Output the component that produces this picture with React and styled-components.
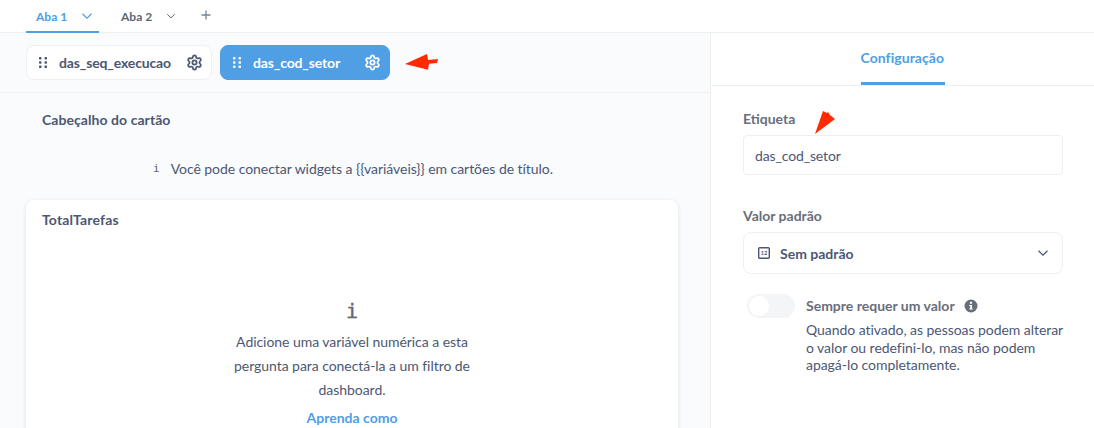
import React from "react";
import styled, { createGlobalStyle } from "styled-components";
import { Settings } from "lucide-react";

const Global = createGlobalStyle`
  html, body { margin: 0; padding: 0; background: #fff; }
  * { box-sizing: border-box; }
  body { font-family: Lato, "Noto Sans", sans-serif; color: #4c5773; }
`;

const Page = styled.div`
  position: relative;
  width: 1094px;
  height: 428px;
  overflow: hidden;
  display: flex;
  flex-direction: column;
`;
const TabBar = styled.div`
  height: 33px;
  flex: none;
  display: flex;
  align-items: stretch;
  padding-left: 26px;
  border-bottom: 1px solid #eeeff1;
`;
const Tab = styled.div`
  display: flex;
  align-items: center;
  gap: ${p => p.$gap}px;
  height: 33px;
  width: ${p => p.$w}px;
  padding: 1px 0 0 10px;
  font-size: 12px;
  font-weight: 700;
  color: ${p => (p.$active ? "#509ee3" : "#5d6579")};
  border-bottom: ${p => (p.$active ? "2px solid #509ee3" : "2px solid transparent")};
  margin-right: ${p => p.$mr || 0}px;
`;
const Plus = styled.div`
  display: flex;
  align-items: center;
  color: #7a8294;
  padding-bottom: 2px;
`;
const Body = styled.div`
  flex: 1;
  display: flex;
  min-height: 0;
`;
const Left = styled.div`
  width: 711px;
  flex: none;
  background: #f9fbfc;
  border-right: 1px solid #eeeff1;
  display: flex;
  flex-direction: column;
`;
const ChipRow = styled.div`
  height: 60px;
  flex: none;
  display: flex;
  align-items: flex-start;
  gap: 8px;
  padding: 12px 0 0 26px;
  border-bottom: 1px solid #eeeff1;
`;
const Chip = styled.div`
  width: ${p => p.$w}px;
  height: 35px;
  display: flex;
  align-items: center;
  padding: 0 8px 0 12px;
  border-radius: 8px;
  font-size: 14px;
  font-weight: 700;
  letter-spacing: -0.14px;
  background: ${p => (p.$active ? "#509ee3" : "#fff")};
  color: ${p => (p.$active ? "#fff" : "#4c5773")};
  border: 1px solid ${p => (p.$active ? "#509ee3" : "#eeeff1")};
`;
const ChipLabel = styled.span`
  flex: 1;
  margin-left: 12px;
  white-space: nowrap;
`;
const SectionTitle = styled.div`
  font-size: 14px;
  font-weight: 700;
  line-height: 17px;
  letter-spacing: 0.06px;
  padding: 18px 0 0 42px;
`;
const Hint = styled.div`
  display: flex;
  justify-content: center;
  align-items: center;
  gap: 11px;
  margin-top: 32px;
  padding-right: 4px;
  height: 20px;
  font-size: 14px;
  letter-spacing: -0.05px;
`;
const MonoI = styled.span`
  font-family: "DejaVu Sans Mono", monospace;
  font-size: ${p => p.$s}px;
  -webkit-text-stroke: ${p => p.$stroke || 0}px #5d6579;
  line-height: 1;
  color: #5d6579;
`;
const Card = styled.div`
  width: 652px;
  height: 300px;
  margin: 23px 0 0 26px;
  flex: none;
  background: #fff;
  border-radius: 8px;
  box-shadow: 0 1px 5px rgba(0, 0, 0, 0.1);
  padding: 11px 16px 0;
`;
const CardTitle = styled.div`
  font-size: 14px;
  font-weight: 700;
  line-height: 17px;
  letter-spacing: 0.15px;
`;
const CardEmpty = styled.div`
  display: flex;
  flex-direction: column;
  align-items: center;
  margin-top: 73px;
  text-align: center;
`;
const EmptyText = styled.div`
  width: 250px;
  margin-top: 9px;
  font-size: 14px;
  line-height: 24px;
  letter-spacing: -0.05px;
`;
const LearnLink = styled.div`
  margin-top: 7px;
  font-size: 14px;
  font-weight: 700;
  line-height: 17px;
  color: #509ee3;
`;
const Right = styled.div`
  flex: 1;
  min-width: 0;
  background: #fff;
  display: flex;
  flex-direction: column;
`;
const SideTabs = styled.div`
  height: 53px;
  flex: none;
  display: flex;
  justify-content: center;
  border-bottom: 1px solid #eeeff1;
`;
const SideTab = styled.div`
  height: 52px;
  width: 84px;
  padding-top: 16px;
  font-size: 14px;
  font-weight: 700;
  line-height: 17px;
  letter-spacing: 0.05px;
  color: #509ee3;
  white-space: nowrap;
  border-bottom: 3px solid #509ee3;
`;
const SideBody = styled.div`
  padding: 24px 31px 0 32px;
`;
const Label = styled.div`
  font-size: 14px;
  font-weight: 700;
  line-height: 17px;
  color: #696e7b;
  margin-bottom: 8px;
`;
const Input = styled.div`
  height: 40px;
  display: flex;
  align-items: center;
  padding: 0 11px;
  font-size: 14px;
  letter-spacing: -0.14px;
  border: 1px solid #eeeff1;
  border-radius: 4px;
  margin-bottom: 32px;
`;
const Select = styled.div`
  height: 42px;
  display: flex;
  align-items: center;
  gap: 10px;
  padding: 0 13px 0 14px;
  font-size: 14px;
  font-weight: 700;
  border: 1px solid #eeeff1;
  border-radius: 8px;
  margin-bottom: 20px;
`;
const SelectText = styled.span`
  flex: 1;
`;
const ToggleRow = styled.div`
  display: flex;
  padding-left: 4px;
`;
const Toggle = styled.div`
  width: 48px;
  height: 24px;
  flex: none;
  border-radius: 12px;
  background: #f3f5f7;
  padding: 2px;
  margin-right: 11px;
`;
const Knob = styled.div`
  width: 20px;
  height: 20px;
  border-radius: 50%;
  background: #fff;
`;
const ToggleText = styled.div`
  display: flex;
  flex-direction: column;
  min-width: 0;
`;
const ToggleTitle = styled.div`
  display: flex;
  align-items: center;
  gap: 9px;
  font-size: 14px;
  font-weight: 700;
  line-height: 24px;
  color: #696e7b;
  white-space: nowrap;
`;
const ToggleDesc = styled.div`
  font-size: 14px;
  line-height: 17.5px;
  letter-spacing: -0.05px;
  margin-top: 3px;
  width: 259px;
`;
const Annotation = styled.svg`
  position: absolute;
  left: ${p => p.$x}px;
  top: ${p => p.$y}px;
`;

const Chevron = ({ size = 12, color = "currentColor" }) => (
  <svg width={size} height={size} viewBox="0 0 12 12" fill="none" stroke={color} strokeWidth="1.2">
    <path d="M1.5 3.8 6 8.2l4.5-4.4" />
  </svg>
);
const Grip = ({ color }) => (
  <svg width="8" height="11" viewBox="0 0 8 11" fill={color} style={{ flex: "none" }}>
    {[0, 5.5].map(x => [0, 4.25, 8.5].map(y => <rect key={`${x}-${y}`} x={x} y={y} width="2.5" height="2.5" rx="0.7" />))}
  </svg>
);
const Calendar = () => (
  <svg width="12" height="12" viewBox="0 0 12 12" style={{ flex: "none" }}>
    <rect x="0.7" y="0.7" width="10.6" height="10.6" rx="1" fill="none" stroke="#4c5773" strokeWidth="1.4" />
    <text x="6" y="8.1" fontSize="5.5" fontWeight="700" fontFamily="Lato, sans-serif" textAnchor="middle" fill="#4c5773">12</text>
  </svg>
);
const InfoDot = () => (
  <svg width="14" height="14" viewBox="0 0 14 14">
    <circle cx="7" cy="7" r="6.5" fill="#696e7b" />
    <rect x="6" y="2.8" width="2" height="2" fill="#fff" />
    <path d="M5.3 6h2.7v3.6h.8v1H5.3v-1h.9V7h-.9z" fill="#fff" />
  </svg>
);

export default function App() {
  return (
    <Page>
      <Global />
      <TabBar>
        <Tab $active $w={73} $mr={12} $gap={14}>
          Aba 1 <Chevron />
        </Tab>
        <Tab $w={73} $mr={16} $gap={14}>
          Aba 2 <Chevron size={10} />
        </Tab>
        <Plus>
          <svg width="12" height="12" viewBox="0 0 12 12" stroke="currentColor" strokeWidth="1.3" fill="none">
            <path d="M6 1.5v9M1.5 6h9" />
          </svg>
        </Plus>
      </TabBar>
      <Body>
        <Left>
          <ChipRow>
            <Chip $w={186}>
              <Grip color="#4c5773" />
              <ChipLabel>das_seq_execucao</ChipLabel>
              <Settings size={17} color="#4c5773" strokeWidth={2.5} />
            </Chip>
            <Chip $active $w={170}>
              <Grip color="#fff" />
              <ChipLabel>das_cod_setor</ChipLabel>
              <Settings size={17} color="#fff" strokeWidth={2.5} />
            </Chip>
          </ChipRow>
          <SectionTitle>Cabeçalho do cartão</SectionTitle>
          <Hint>
            <MonoI $s={11}>i</MonoI>
            <span>Você pode conectar widgets a {"{{variáveis}}"} em cartões de título.</span>
          </Hint>
          <Card>
            <CardTitle>TotalTarefas</CardTitle>
            <CardEmpty>
              <MonoI $s={20} $stroke={0.4}>i</MonoI>
              <EmptyText>Adicione uma variável numérica a esta pergunta para conectá-la a um filtro de dashboard.</EmptyText>
              <LearnLink>Aprenda como</LearnLink>
            </CardEmpty>
          </Card>
        </Left>
        <Right>
          <SideTabs>
            <SideTab>Configuração</SideTab>
          </SideTabs>
          <SideBody>
            <Label>Etiqueta</Label>
            <Input>das_cod_setor</Input>
            <Label>Valor padrão</Label>
            <Select>
              <Calendar />
              <SelectText>Sem padrão</SelectText>
              <Chevron color="#4c5773" />
            </Select>
            <ToggleRow>
              <Toggle>
                <Knob />
              </Toggle>
              <ToggleText>
                <ToggleTitle>
                  Sempre requer um valor <InfoDot />
                </ToggleTitle>
                <ToggleDesc>Quando ativado, as pessoas podem alterar o valor ou redefini-lo, mas não podem apagá-lo completamente.</ToggleDesc>
              </ToggleText>
            </ToggleRow>
          </SideBody>
        </Right>
      </Body>
      <Annotation $x={405} $y={53} width="33" height="18" viewBox="0 0 33 18">
        <path d="M0 11 22 1l1 6 10-1-1 4-8 .8-1 6z" fill="#ff2a00" />
      </Annotation>
      <Annotation $x={814} $y={110} width="23" height="25" viewBox="0 0 23 25">
        <path d="M1 24 9 1l4 2 1-1 2 3 5 4z" fill="#ff2a00" />
      </Annotation>
    </Page>
  );
}
